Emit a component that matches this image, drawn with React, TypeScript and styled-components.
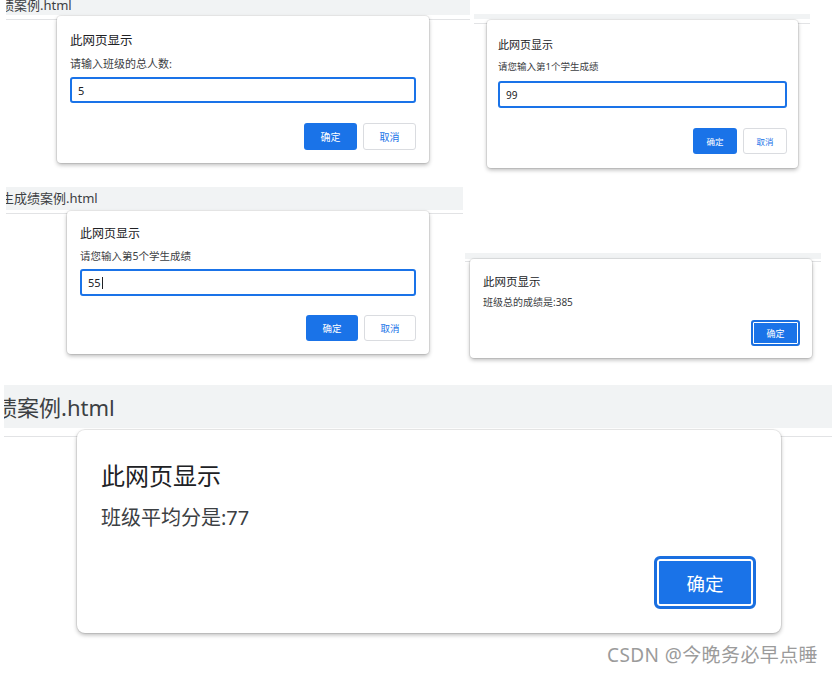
import React from 'react';
import styled, { createGlobalStyle, css } from 'styled-components';

interface Metrics {
  w: number;
  left: number;
  top: number;
  pt: number;
  pl: number;
  pr: number;
  pb: number;
  title: number;
  titleLh: number;
  msg: number;
  msgLh: number;
  msgGap: number;
  inputH?: number;
  inputGap?: number;
  inputFont?: number;
  btnGap: number;
  btnW: number;
  btnH: number;
  btnFont: number;
  btnSpace: number;
  radius: number;
  ring: number;
}

interface ShotData {
  width: number;
  left: number;
  top: number;
  stripH: number;
  lineGap: number;
  label?: string;
  labelSize?: number;
  labelTop?: number;
  labelLeft?: number;
  message: string;
  value?: string;
  caret?: boolean;
  cancel: boolean;
  m: Metrics;
}

const TITLE = '此网页显示';

const SHOTS: ShotData[][] = [
  [
    {
      width: 464, left: 6, top: 0, stripH: 15, lineGap: 4,
      label: '绩案例.html', labelSize: 13, labelTop: -3, labelLeft: -5,
      message: '请输入班级的总人数:', value: '5', cancel: true,
      m: {
        w: 372, left: 51, top: -4, pt: 16, pl: 13, pr: 13, pb: 13,
        title: 12.5, titleLh: 17, msg: 11, msgLh: 14, msgGap: 8,
        inputH: 26, inputGap: 6, inputFont: 11,
        btnGap: 20, btnW: 53, btnH: 27, btnFont: 10, btnSpace: 6, radius: 4, ring: 0,
      },
    },
    {
      width: 336, left: 4, top: 14, stripH: 5, lineGap: 4,
      message: '请您输入第1个学生成绩', value: '99', cancel: true,
      m: {
        w: 311, left: 13, top: -4, pt: 17, pl: 11, pr: 11, pb: 14,
        title: 11, titleLh: 16, msg: 9.5, msgLh: 13, msgGap: 7,
        inputH: 27, inputGap: 8, inputFont: 10,
        btnGap: 20, btnW: 44, btnH: 26, btnFont: 8.5, btnSpace: 6, radius: 4, ring: 0,
      },
    },
  ],
  [
    {
      width: 457, left: 6, top: 0, stripH: 23, lineGap: 3,
      label: '生成绩案例.html', labelSize: 13, labelTop: 3, labelLeft: -5,
      message: '请您输入第5个学生成绩', value: '55', caret: true, cancel: true,
      m: {
        w: 362, left: 61, top: -3, pt: 14, pl: 13, pr: 13, pb: 13,
        title: 12, titleLh: 17, msg: 10.5, msgLh: 13, msgGap: 8,
        inputH: 27, inputGap: 6, inputFont: 11,
        btnGap: 19, btnW: 52, btnH: 26, btnFont: 9.5, btnSpace: 6, radius: 4, ring: 0,
      },
    },
    {
      width: 356, left: 2, top: 66, stripH: 6, lineGap: 2,
      message: '班级总的成绩是:385', cancel: false,
      m: {
        w: 342, left: 5, top: -3, pt: 14, pl: 13, pr: 12, pb: 12,
        title: 11.5, titleLh: 17, msg: 10, msgLh: 13, msgGap: 6,
        btnGap: 11, btnW: 49, btnH: 26, btnFont: 9, btnSpace: 6, radius: 4, ring: 2,
      },
    },
  ],
  [
    {
      width: 828, left: 4, top: 0, stripH: 43, lineGap: 8,
      label: '绩案例.html', labelSize: 22, labelTop: 8, labelLeft: -9,
      message: '班级平均分是:77', cancel: false,
      m: {
        w: 704, left: 73, top: -7, pt: 32, pl: 24, pr: 25, pb: 24,
        title: 24, titleLh: 28, msg: 20, msgLh: 24, msgGap: 16,
        btnGap: 26, btnW: 102, btnH: 53, btnFont: 18.5, btnSpace: 6, radius: 8, ring: 3,
      },
    },
  ],
];

const ROW_GAPS = [0, 19, 27];

const GlobalStyle = createGlobalStyle`
  html, body {
    margin: 0;
    padding: 0;
    background: #fff;
  }
  body {
    font-family: "Noto Sans", "Noto Sans CJK SC", sans-serif;
  }
`;

const Canvas = styled.div`
  width: 832px;
  height: 675px;
  overflow: hidden;
  display: flex;
  flex-direction: column;
`;

const Row = styled.div<{ $gap: number }>`
  display: flex;
  align-items: flex-start;
  margin-top: ${p => p.$gap}px;
`;

const Shot = styled.div<{ $w: number; $left: number; $top: number }>`
  flex: none;
  width: ${p => p.$w}px;
  margin-left: ${p => p.$left}px;
  margin-top: ${p => p.$top}px;
`;

const Strip = styled.div<{ $h: number }>`
  height: ${p => p.$h}px;
  background: #f1f3f4;
  overflow: hidden;
  display: flex;
  align-items: flex-start;
`;

const Label = styled.span<{ $size: number; $top: number; $left: number }>`
  flex: none;
  font-size: ${p => p.$size}px;
  line-height: ${p => Math.round(p.$size * 1.3)}px;
  margin-top: ${p => p.$top}px;
  margin-left: ${p => p.$left}px;
  color: #3c4043;
  white-space: nowrap;
`;

const Page = styled.div<{ $gap: number }>`
  margin-top: ${p => p.$gap}px;
  border-top: 1px solid #e2e3e5;
  display: flex;
`;

const Dialog = styled.div<{ $m: Metrics }>`
  position: relative;
  box-sizing: border-box;
  width: ${p => p.$m.w}px;
  margin-left: ${p => p.$m.left}px;
  margin-top: ${p => p.$m.top}px;
  padding: ${p => `${p.$m.pt}px ${p.$m.pr}px ${p.$m.pb}px ${p.$m.pl}px`};
  background: #fff;
  border-radius: ${p => p.$m.radius}px;
  box-shadow: 0 0 0 1px rgba(0, 0, 0, 0.07), 0 2px 4px rgba(0, 0, 0, 0.28);
  display: flex;
  flex-direction: column;
`;

const Title = styled.div<{ $m: Metrics }>`
  font-size: ${p => p.$m.title}px;
  line-height: ${p => p.$m.titleLh}px;
  color: #202124;
`;

const Message = styled.div<{ $m: Metrics }>`
  margin-top: ${p => p.$m.msgGap}px;
  font-size: ${p => p.$m.msg}px;
  line-height: ${p => p.$m.msgLh}px;
  color: #3c4043;
`;

const Field = styled.div<{ $m: Metrics }>`
  box-sizing: border-box;
  margin-top: ${p => p.$m.inputGap}px;
  height: ${p => p.$m.inputH}px;
  border: 2px solid #1a73e8;
  border-radius: 3px;
  padding-left: 6px;
  display: flex;
  align-items: center;
  font-size: ${p => p.$m.inputFont}px;
  color: #202124;
`;

const Caret = styled.span`
  width: 1px;
  height: 12px;
  margin-left: 1px;
  background: #202124;
`;

const Actions = styled.div<{ $m: Metrics }>`
  margin-top: ${p => p.$m.btnGap}px;
  display: flex;
  justify-content: flex-end;
  gap: ${p => p.$m.btnSpace}px;
`;

const Button = styled.button<{ $m: Metrics; $primary?: boolean }>`
  box-sizing: border-box;
  width: ${p => p.$m.btnW}px;
  height: ${p => p.$m.btnH}px;
  padding: 0;
  font-family: inherit;
  font-size: ${p => p.$m.btnFont}px;
  border-radius: ${p => Math.max(3, Math.round(p.$m.radius * 0.7))}px;
  ${p =>
    p.$primary
      ? css`
          background: #1a73e8;
          color: #fff;
          border: ${p.$m.ring ? `${p.$m.ring}px solid #1a6fe0` : 'none'};
          box-shadow: ${p.$m.ring ? `inset 0 0 0 ${p.$m.ring - 1}px #fff` : 'none'};
        `
      : css`
          background: #fff;
          color: #1a73e8;
          border: 1px solid #dadce0;
        `}
`;

const Watermark = styled.div`
  margin-top: 11px;
  padding-right: 14px;
  text-align: right;
  font-size: 19px;
  line-height: 22px;
  color: #9b9b9b;
  letter-spacing: 0.4px;
`;

const Screenshot = ({ s }: { s: ShotData }) => (
  <Shot $w={s.width} $left={s.left} $top={s.top}>
    <Strip $h={s.stripH}>
      {s.label && (
        <Label $size={s.labelSize || 13} $top={s.labelTop || 0} $left={s.labelLeft || 0}>
          {s.label}
        </Label>
      )}
    </Strip>
    <Page $gap={s.lineGap}>
      <Dialog $m={s.m}>
        <Title $m={s.m}>{TITLE}</Title>
        <Message $m={s.m}>{s.message}</Message>
        {s.value !== undefined && (
          <Field $m={s.m}>
            <span>{s.value}</span>
            {s.caret && <Caret />}
          </Field>
        )}
        <Actions $m={s.m}>
          <Button $m={s.m} $primary>确定</Button>
          {s.cancel && <Button $m={s.m}>取消</Button>}
        </Actions>
      </Dialog>
    </Page>
  </Shot>
);

export default function App() {
  return (
    <>
      <GlobalStyle />
      <Canvas>
        {SHOTS.map((row, i) => (
          <Row key={i} $gap={ROW_GAPS[i]}>
            {row.map((s, j) => (
              <Screenshot key={j} s={s} />
            ))}
          </Row>
        ))}
        <Watermark>CSDN @今晚务必早点睡</Watermark>
      </Canvas>
    </>
  );
}
